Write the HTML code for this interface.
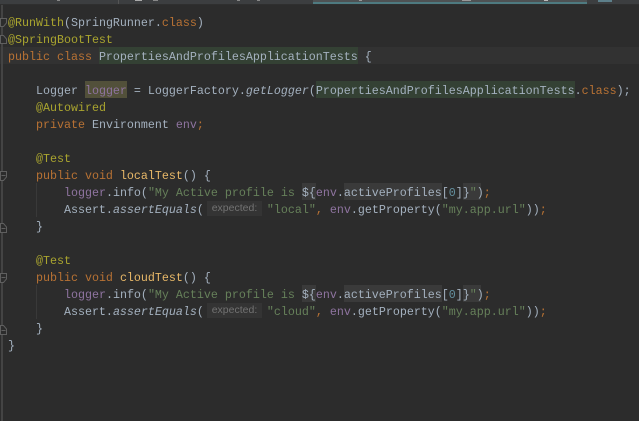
<!DOCTYPE html>
<html><head><meta charset="utf-8"><style>
html,body{margin:0;padding:0;width:639px;height:421px;overflow:hidden;background:#2c2c2c}
#r{position:relative;width:639px;height:421px;overflow:hidden;background:#2c2c2c}
.a{position:absolute}
#t{position:absolute;left:0;top:0;width:639px;height:421px;filter:blur(0.35px)}
.l{position:absolute;left:8px;height:17px;line-height:17px;white-space:pre;font-family:"Liberation Mono",monospace;font-size:11.66px;color:#a4b1bf}
.k{color:#b87234}.n{color:#aaa52f}.s{color:#66805a}.p{color:#8f74a0}.f{color:#e8b868}.i{font-style:italic}.d{color:#64909f}
.g{position:absolute;background:#344134;height:17px}
.u{position:absolute;background:#3a3a3a;height:17px}
.o{position:absolute;background:#52503a;height:17px}
.h{position:absolute;background:#343434;color:#727272;font-family:"Liberation Sans",sans-serif;font-size:10.5px;line-height:15px;height:15px;width:55px;left:207px;text-align:center}
</style></head><body><div id="r">
<div class="a" style="left:0;top:0;width:639px;height:4px;background:#3c3e40"></div>
<div class="a" style="left:118px;top:0;width:1px;height:4px;background:#555"></div>
<div class="a" style="left:57px;top:0;width:3px;height:1px;background:#888"></div>
<div class="a" style="left:135px;top:0;width:7px;height:1px;background:#aaa"></div>
<div class="a" style="left:153px;top:0;width:5px;height:1px;background:#888"></div>
<div class="a" style="left:237px;top:0;width:3px;height:1px;background:#888"></div>
<div class="a" style="left:257px;top:0;width:3px;height:1px;background:#888"></div>
<div class="a" style="left:313px;top:0;width:274px;height:2px;background:#4e5254"></div>
<div class="a" style="left:313px;top:2px;width:274px;height:3px;background:#4e7a80"></div>
<div class="a" style="left:359px;top:0;width:3px;height:1px;background:#999"></div>
<div class="a" style="left:462px;top:0;width:9px;height:1px;background:#999"></div>
<div class="a" style="left:544px;top:0;width:4px;height:1px;background:#bbb"></div>
<div class="a" style="left:598px;top:0;width:14px;height:2px;background:#5d7f8a"></div>
<div class="a" style="left:0;top:4px;width:639px;height:1px;background:#2f2f2f"></div>
<div class="a" style="left:0;top:47px;width:639px;height:17px;background:#323232"></div>
<div class="a" style="left:1px;top:5px;width:2px;height:416px;background:#444"></div>
<svg class="a" style="left:0;top:0" width="8" height="350" fill="#2c2c2c" stroke="#5f5f5f" stroke-width="1">
<path d="M0.5 18.5H6.5V23L3.5 26.5H0.5Z"/><path d="M0.5 43.5H6.5V39L3.5 35.5H0.5Z"/>
<path d="M0.5 171.5H6.5V177L3.5 180.5H0.5ZM1.5 175.5H5.5"/><path d="M0.5 232.5H6.5V227L3.5 223.5H0.5ZM1.5 228.5H5.5"/>
<path d="M0.5 273.5H6.5V279L3.5 282.5H0.5ZM1.5 277.5H5.5"/><path d="M0.5 334.5H6.5V329L3.5 325.5H0.5ZM1.5 330.5H5.5"/>
</svg>
<div class="a" style="left:36px;top:183px;width:1px;height:34px;background:#393939"></div>
<div class="a" style="left:36px;top:285px;width:1px;height:34px;background:#393939"></div>
<div class="g" style="left:99px;top:47px;width:259px"></div>
<div class="o" style="left:85px;top:81px;width:42px"></div>
<div class="g" style="left:316px;top:81px;width:259px"></div>
<div class="u" style="left:302px;top:183px;width:14px"></div>
<div class="u" style="left:344px;top:183px;width:98px"></div>
<div class="u" style="left:463px;top:183px;width:18px"></div>
<div class="u" style="left:302px;top:285px;width:14px"></div>
<div class="u" style="left:344px;top:285px;width:98px"></div>
<div class="u" style="left:463px;top:285px;width:18px"></div>
<div id="t">
<div class="l" style="top:15px"><span class="n">@RunWith</span>(SpringRunner.<span class="k">class</span>)</div>
<div class="l" style="top:32px"><span class="n">@SpringBootTest</span></div>
<div class="l" style="top:49px"><span class="k">public class </span>PropertiesAndProfilesApplicationTests {</div>
<div class="l" style="top:83px">    Logger <span class="p">logger</span> = LoggerFactory.<span class="i">getLogger</span>(PropertiesAndProfilesApplicationTests.<span class="k">class</span>);</div>
<div class="l" style="top:100px">    <span class="n">@Autowired</span></div>
<div class="l" style="top:117px">    <span class="k">private </span>Environment <span class="p">env</span><span class="k">;</span></div>
<div class="l" style="top:151px">    <span class="n">@Test</span></div>
<div class="l" style="top:168px">    <span class="k">public void </span><span class="f">localTest</span>() {</div>
<div class="l" style="top:185px">        <span class="p">logger</span>.info(<span class="s">"My Active profile is </span>${<span class="p">env</span>.activeProfiles[<span class="d">0</span>]}<span class="s">"</span>)<span class="k">;</span></div>
<div class="l" style="top:202px">        Assert.<span class="i">assertEquals</span>(<span style="display:inline-block;width:63px"></span><span class="s">"local"</span><span class="k">,</span> <span class="p">env</span>.getProperty(<span class="s">"my.app.url"</span>))<span class="k">;</span></div>
<div class="l" style="top:219px">    }</div>
<div class="l" style="top:253px">    <span class="n">@Test</span></div>
<div class="l" style="top:270px">    <span class="k">public void </span><span class="f">cloudTest</span>() {</div>
<div class="l" style="top:287px">        <span class="p">logger</span>.info(<span class="s">"My Active profile is </span>${<span class="p">env</span>.activeProfiles[<span class="d">0</span>]}<span class="s">"</span>)<span class="k">;</span></div>
<div class="l" style="top:304px">        Assert.<span class="i">assertEquals</span>(<span style="display:inline-block;width:63px"></span><span class="s">"cloud"</span><span class="k">,</span> <span class="p">env</span>.getProperty(<span class="s">"my.app.url"</span>))<span class="k">;</span></div>
<div class="l" style="top:321px">    }</div>
<div class="l" style="top:338px">}</div>
<div class="h" style="top:201px">expected:</div>
<div class="h" style="top:303px">expected:</div>
</div>
</div></body></html>
